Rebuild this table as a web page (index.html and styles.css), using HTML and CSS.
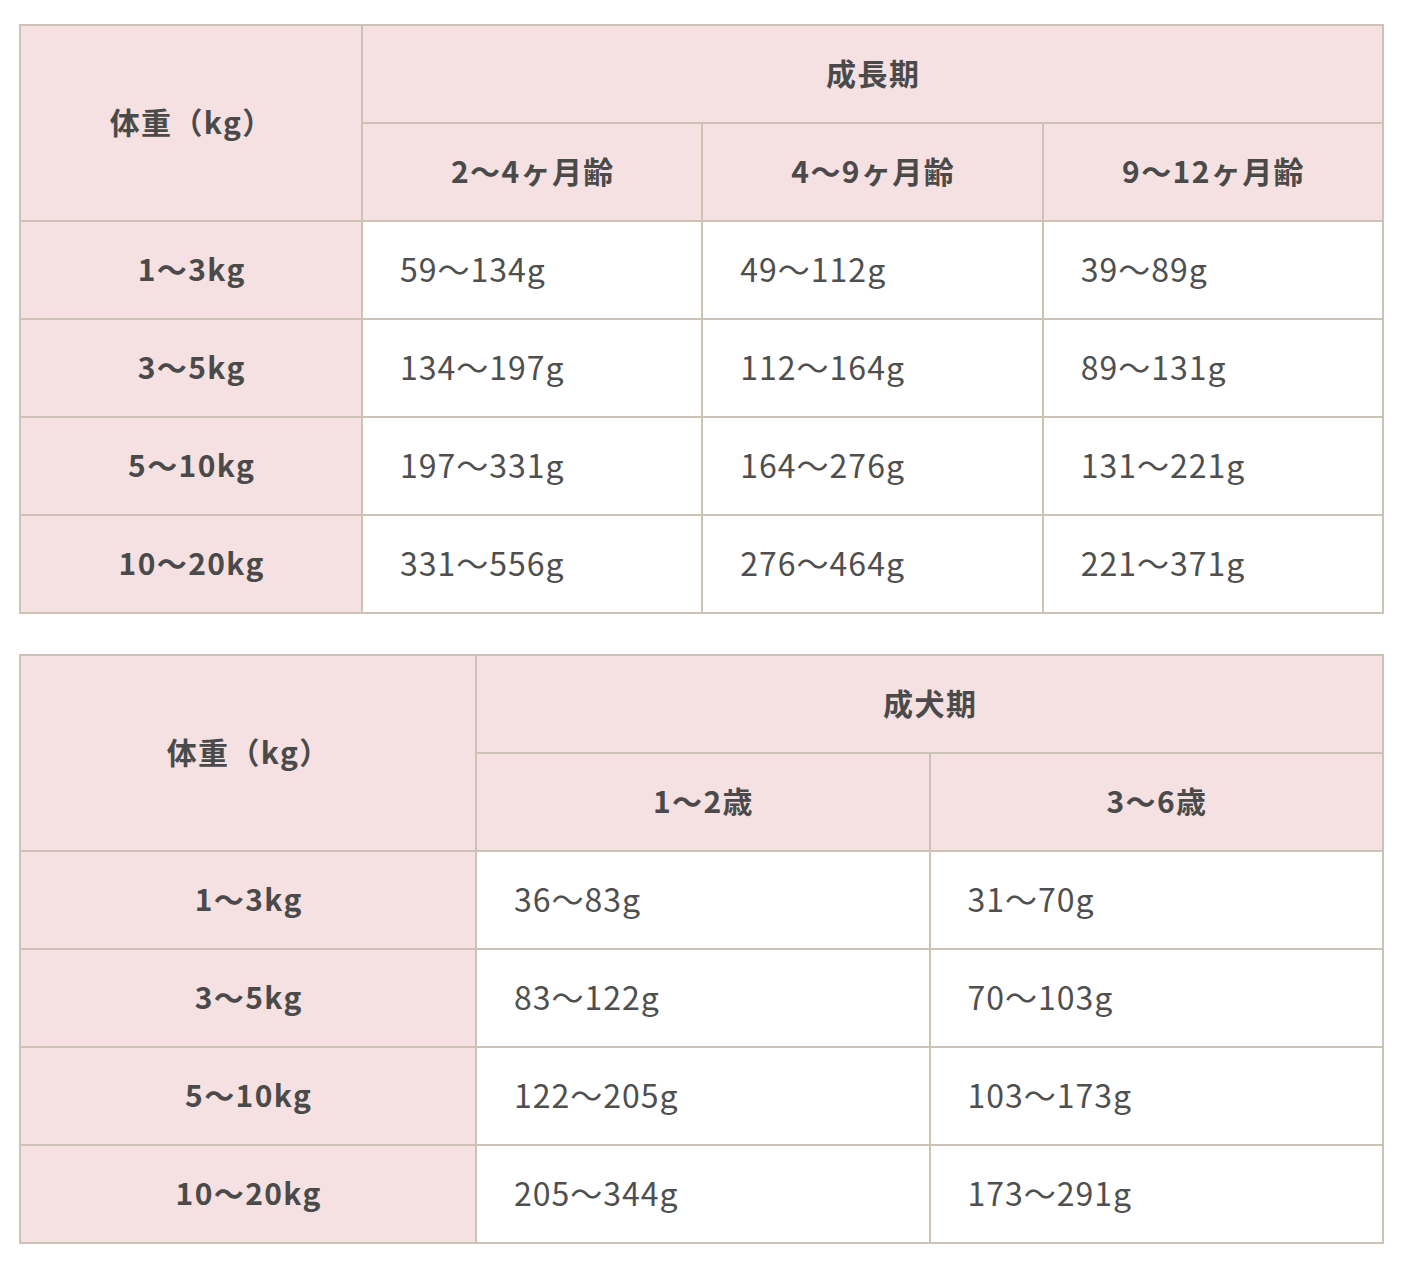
FILE: index.html
```html
<!DOCTYPE html>
<html lang="ja">
<head>
<meta charset="utf-8">
<link rel="stylesheet" href="styles.css">
</head>
<body>
<div class="page">
  <table class="feed t1">
    <colgroup><col class="c-w1"><col><col><col></colgroup>
    <tr>
      <th rowspan="2" class="rh">体重（kg）</th>
      <th colspan="3">成長期</th>
    </tr>
    <tr>
      <th>2〜4ヶ月齢</th>
      <th>4〜9ヶ月齢</th>
      <th>9〜12ヶ月齢</th>
    </tr>
    <tr><th>1〜3kg</th><td>59〜134g</td><td>49〜112g</td><td>39〜89g</td></tr>
    <tr><th>3〜5kg</th><td>134〜197g</td><td>112〜164g</td><td>89〜131g</td></tr>
    <tr><th>5〜10kg</th><td>197〜331g</td><td>164〜276g</td><td>131〜221g</td></tr>
    <tr><th>10〜20kg</th><td>331〜556g</td><td>276〜464g</td><td>221〜371g</td></tr>
  </table>

  <table class="feed t2">
    <colgroup><col class="c-w2"><col><col></colgroup>
    <tr>
      <th rowspan="2" class="rh">体重（kg）</th>
      <th colspan="2">成犬期</th>
    </tr>
    <tr>
      <th>1〜2歳</th>
      <th>3〜6歳</th>
    </tr>
    <tr><th>1〜3kg</th><td>36〜83g</td><td>31〜70g</td></tr>
    <tr><th>3〜5kg</th><td>83〜122g</td><td>70〜103g</td></tr>
    <tr><th>5〜10kg</th><td>122〜205g</td><td>103〜173g</td></tr>
    <tr><th>10〜20kg</th><td>205〜344g</td><td>173〜291g</td></tr>
  </table>
</div>
</body>
</html>
```

FILE: styles.css
```css
html, body {
  margin: 0;
  padding: 0;
  background: #ffffff;
}

.page {
  padding: 24px 0 0 19px;
  display: flex;
  flex-direction: column;
  gap: 40px;
  align-items: flex-start;
}

.feed {
  border-collapse: collapse;
  table-layout: fixed;
  width: 1365px;
  font-family: "Noto Sans CJK JP", "Noto Sans", sans-serif;
  color: #4a4a4a;
  border: 2px solid #ccc2b6;
}

.c-w1 { width: 342px; }
.c-w2 { width: 456px; }

.feed th,
.feed td {
  border: 2px solid #ccc2b6;
  height: 98px;
  padding: 0 0 5px 0;
  box-sizing: border-box;
  line-height: 1;
}

.feed th {
  background: #f5e1e1;
  font-size: 30px;
  font-weight: 700;
  text-align: center;
  letter-spacing: 1.4px;
  text-indent: 1.4px;
}

.feed td {
  background: #ffffff;
  font-size: 32px;
  font-weight: 400;
  color: #4f4f4f;
  text-align: left;
  padding-left: 37px;
  letter-spacing: 1px;
}
```
